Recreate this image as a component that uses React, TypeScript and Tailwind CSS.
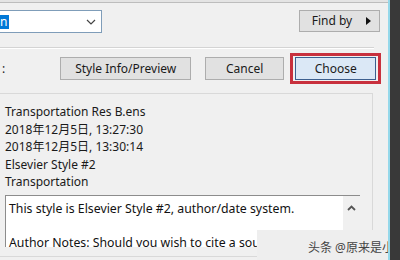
import React from "react";

const font = { fontFamily: '"Noto Sans", "Noto Sans CJK SC", sans-serif' };

function Btn({ children, className = "" }: { children: React.ReactNode; className?: string }) {
  return (
    <div
      className={
        "flex h-[22px] items-center justify-center border border-[#adadad] bg-[#e1e1e1] text-[12px] text-[#1a1a1a] " +
        className
      }
    >
      {children}
    </div>
  );
}

export default function App() {
  return (
    <div className="flex h-[260px] w-[400px] overflow-hidden bg-[#f0f0f0]" style={font}>
      <div className="relative flex w-[388px] flex-col overflow-hidden">
        <div className="h-[2px] bg-[#e4e4e4]" />
        <div className="h-px bg-[#bdbdbd]" />
        {/* Row 1 */}
        <div className="mt-[7px] flex h-[23px] items-start">
          <div className="ml-[-20px] flex h-[23px] w-[122px] items-center border border-[#7f9db9] bg-white">
            <span className="ml-[19px] flex h-[14px] w-[9px] items-center overflow-hidden bg-[#0078d7] text-[12px] leading-none text-white">
              n
            </span>
            <svg className="ml-auto mr-[5px]" width="10" height="6" viewBox="0 0 10 6">
              <path d="M1 1 L5 5 L9 1" fill="none" stroke="#444" strokeWidth="1.2" />
            </svg>
          </div>
          <Btn className="ml-[197px] w-[81px]">
            <span className="ml-[4px]">Find by</span>
            <svg className="ml-[14px]" width="5" height="8" viewBox="0 0 5 8">
              <path d="M0 0 L5 4 L0 8 Z" fill="#111" />
            </svg>
          </Btn>
        </div>
        {/* separator */}
        <div className="mt-[14px] h-px w-[374px] bg-[#d4d4d4]" />
        <div className="h-px w-[374px] bg-white" />
        {/* Row 2 */}
        <div className="mt-[8px] flex h-[23px] items-center">
          <span className="ml-[2px] text-[12px] text-[#222]">:</span>
          <Btn className="ml-[55px] h-[23px] w-[131px]">Style Info/Preview</Btn>
          <Btn className="ml-[14px] h-[23px] w-[79px]">Cancel</Btn>
          <div className="relative ml-[11px]">
            <div className="flex h-[23px] w-[81px] items-center justify-center border border-[#3c5f8f] bg-[#dbe8f6] text-[12px] text-[#1a1a1a]">
              Choose
            </div>
            <div className="absolute inset-x-[-5px] inset-y-[-4px] border-[3px] border-[#c8303d]" />
          </div>
        </div>
        {/* panel */}
        <div className="mt-[13px] flex h-[164px] w-[373px] flex-col border-b border-r border-t border-[#d9d9d9]">
          <div className="pl-[5px] pt-[9px] text-[12px] leading-[17.5px] text-[#1a1a1a]">
            <div>Transportation Res B.ens</div>
            <div>2018年12月5日, 13:27:30</div>
            <div>2018年12月5日, 13:30:14</div>
            <div>Elsevier Style #2</div>
            <div>Transportation</div>
          </div>
          <div className="ml-[5px] mt-[4px] flex h-[52px] w-[355px] overflow-hidden border-l border-t border-[#8c8c8c]">
            <div className="flex-1 bg-white pl-[3px] pt-[4px] text-[12.3px] leading-[17px] text-[#111]">
              <div>This style is Elsevier Style #2, author/date system.</div>
              <div>&nbsp;</div>
              <div>Author Notes: Should you wish to cite a source</div>
            </div>
            <div className="flex w-[17px] justify-center bg-[#f0f0f0] pt-[9px]">
              <svg width="9" height="6" viewBox="0 0 9 6">
                <path d="M1 5 L4.5 1.5 L8 5" fill="none" stroke="#555" strokeWidth="1.8" />
              </svg>
            </div>
          </div>
        </div>
        {/* watermark */}
        <div className="absolute left-[257px] top-[230px] h-[30px] w-[160px] bg-[#eeeeee]">
          <div className="mt-[11px] ml-[51px] whitespace-nowrap text-[12px] leading-[14px] text-[#444]">
            头条 @原来是小苏
          </div>
        </div>
      </div>
      <div className="w-[12px] border-l-2 border-[#95d8ea] bg-[#393939]" />
    </div>
  );
}
